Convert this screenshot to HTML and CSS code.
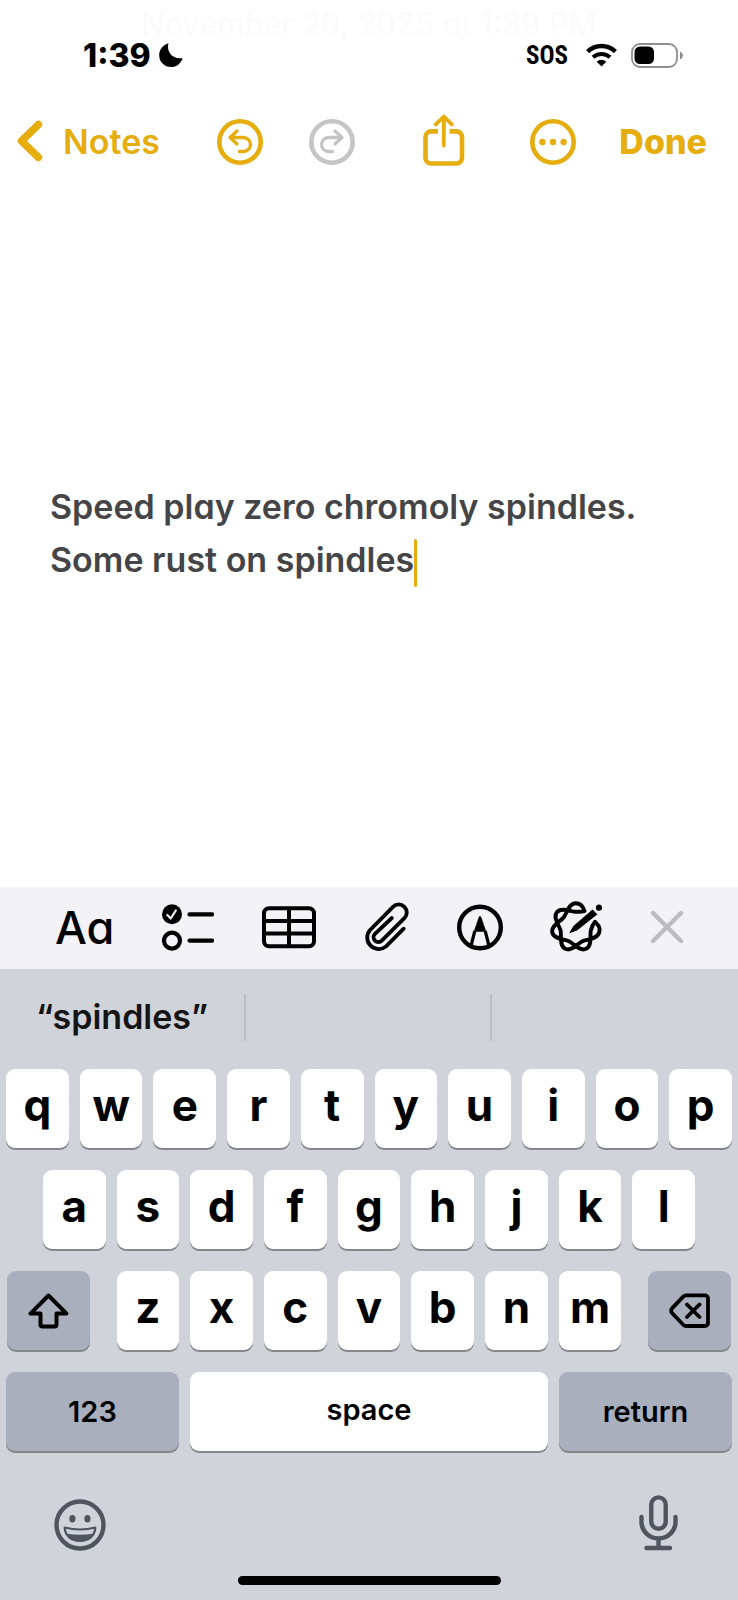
FILE: index.html
```html
<!DOCTYPE html>
<html lang="en">
  <head>
    <meta charset="UTF-8" />
    <meta name="viewport" content="width=device-width, initial-scale=1.0" />
    <title>Notes</title>
    <link rel="stylesheet" href="styles.css">
  </head>
  <body>
    <header>
      <time class="note-date">November 20, 2025 at 1:39 PM</time>
      <div class="status-bar">
        <div class="status-left">
          <span class="clock">1:39</span>
          <svg width="24" height="24" viewBox="0 0 24 24"><path d="M9.5 0.3C7.5 7 11.5 16.500 23.6 15.200C22 20.500 17.500 24 12 24C5.400 24 0.200 18.800 0.200 12.200C0.200 6.600 4 1.800 9.500 0.300Z" /></svg>
        </div>
        <div class="status-right">
          <span class="sos">SOS</span>
          <svg width="31" height="24" viewBox="0 0 31 24" fill="none" stroke="#000">
            <path d="M1.600 8.600a20 20 0 0 1 27.800 0" stroke-width="4.400" />
            <path d="M7 14.300a12.300 12.300 0 0 1 17 0" stroke-width="4" />
            <path d="M15.500 23.500l-4.800-4.800a7 7 0 0 1 9.600 0z" fill="#000" stroke="none" />
          </svg>
          <svg class="battery" width="52" height="25" viewBox="0 0 52 25">
            <rect x="1" y="1" width="45" height="23" rx="8" fill="#fff" stroke="#8f8f8f" stroke-width="1.800" />
            <rect x="3.500" y="3.500" width="19.500" height="17.500" rx="5.500" />
            <path d="M49 8.500q3 1.500 3 4t-3 4z" fill="#8f8f8f" />
          </svg>
        </div>
      </div>
      <nav class="nav-bar">
        <a class="back" href="#">
          <svg width="26" height="42" viewBox="0 0 26 42" fill="none" stroke="currentColor" stroke-width="7.500" stroke-linecap="round" stroke-linejoin="round"><path d="M21.500 4.500L4.500 21L21.500 37.500" /></svg>
          Notes
        </a>
        <button type="button" aria-label="Undo">
          <svg width="46" height="46" viewBox="0 0 46 46" fill="none" stroke="currentColor" stroke-linecap="round" stroke-linejoin="round">
            <circle cx="23" cy="23" r="20.700" stroke-width="4.600" />
            <path d="M20 12L13 18.500L20 25M13.500 18.500H26.500a7 7 0 0 1 0 14H22.500" stroke-width="3.300" />
          </svg>
        </button>
        <button type="button" class="off" aria-label="Redo">
          <svg width="46" height="46" viewBox="0 0 46 46" fill="none" stroke="currentColor" stroke-linecap="round" stroke-linejoin="round">
            <circle cx="23" cy="23" r="20.700" stroke-width="4.600" />
            <path d="M26 12L33 18.500L26 25M32.500 18.500H19.500a7 7 0 0 0 0 14H23.500" stroke-width="3.300" />
          </svg>
        </button>
        <button type="button" aria-label="Share">
          <svg width="42" height="56" viewBox="0 0 42 56" fill="none" stroke="currentColor" stroke-linejoin="round">
            <path d="M15 17.400H8a5.500 5.500 0 0 0-5.500 5.500V44a5.500 5.500 0 0 0 5.500 5.500H33.500a5.500 5.500 0 0 0 5.500-5.500V22.900a5.500 5.500 0 0 0-5.500-5.500H26.500" stroke-width="4.600" />
            <path d="M20.800 3V31.500M12.800 10.300L20.800 2.500L28.800 10.300" stroke-width="3.800" stroke-linecap="round" />
          </svg>
        </button>
        <button type="button" aria-label="More">
          <svg width="46" height="46" viewBox="0 0 46 46" fill="currentColor">
            <circle cx="23" cy="23" r="20.700" fill="none" stroke="currentColor" stroke-width="4.600" />
            <circle cx="12.400" cy="23" r="3.200" />
            <circle cx="23" cy="23" r="3.200" />
            <circle cx="33.600" cy="23" r="3.200" />
          </svg>
        </button>
        <button type="button" class="done">Done</button>
      </nav>
    </header>

    <main class="note" contenteditable="true" role="textbox" aria-multiline="true" aria-label="Note" spellcheck="false">
      <p>Speed play zero chromoly spindles.</p>
      <p>Some rust on spindles<span class="caret"></span></p>
    </main>

    <div class="format-bar">
      <button type="button" class="text-style" aria-label="Text style">Aa</button>
      <button type="button" aria-label="Checklist">
        <svg width="52" height="47" viewBox="0 0 52 47" fill="none" stroke="#000" stroke-width="4.200" stroke-linecap="round" stroke-linejoin="round">
          <circle cx="10" cy="10.300" r="10" fill="#000" stroke="none" />
          <path d="M5.300 11L8.700 14.500L13.800 6.500" stroke="#f2f2f7" stroke-width="2.200" />
          <circle cx="10" cy="36.600" r="8" />
          <path d="M27.500 10.400H50M27.500 36.600H50" />
        </svg>
      </button>
      <button type="button" aria-label="Table">
        <svg width="54" height="43" viewBox="0 0 54 43" fill="none" stroke="#000" stroke-width="4">
          <rect x="2" y="2.200" width="50" height="38" rx="5" />
          <path d="M2 15H52M2 27.400H52M27 2V40" />
        </svg>
      </button>
      <button type="button" aria-label="Attachment">
        <svg width="46" height="50" viewBox="0 0 46 50" fill="none" stroke="#000" stroke-width="3.800" stroke-linecap="round"><path d="M40.700 26.700L23.100 44.400A11.500 11.500 0 0 1 6.900 28.200L30 4.800A8 8 0 0 1 41.400 16.200L18.800 38.600A4.800 4.800 0 0 1 12 31.800L28.800 16" /></svg>
      </button>
      <button type="button" aria-label="Markup">
        <svg width="46" height="47" viewBox="0 0 46 47" fill="none" stroke="#000" stroke-linejoin="round">
          <circle cx="23" cy="23.500" r="20.800" stroke-width="4.400" />
          <path d="M17.800 27L14 42M28.200 27L32 42" stroke-width="3.200" />
          <path d="M23 13.500L18.500 26.500H27.500Z" fill="#000" stroke-width="2.500" />
        </svg>
      </button>
      <button type="button" aria-label="Image wand">
        <svg width="52" height="52" viewBox="0 0 52 52" fill="none" stroke="#000" stroke-width="3.900" stroke-linejoin="round">
          <path d="M45 20.700C48 24 50.700 26 49.100 31.500C47.500 38.300 36.900 38 32.400 40.200C27.900 42.400 21.600 50.800 15.300 47.800C9 44.800 11.700 34.500 10.600 29.600C9.500 24.700 2.500 16.700 6.900 11.200C11.300 5.700 20.700 10.700 25.700 10.700C29 10.700 32 11 34.500 10C33 5 30 2.200 25.700 2.200C18.700 2.200 16.700 12.600 13.600 16.500C10.500 20.400 0.700 24.700 2.300 31.500C3.900 38.300 14.500 38 19 40.200C23.500 42.400 29.800 50.800 36.100 47.800C42.400 44.800 39.700 34.500 40.800 29.600C41.900 25 43 23 45 20.700Z" />
          <path d="M20 31.500L24 25L42.500 9L46.800 13.300L27 29Z" fill="#000" stroke-width="1" stroke-linejoin="round" />
          <circle cx="49" cy="6.700" r="3.100" fill="#000" stroke="none" />
        </svg>
      </button>
      <button type="button" class="close" aria-label="Close">
        <svg width="34" height="34" viewBox="0 0 34 34" fill="none" stroke="#bcbcc1" stroke-width="4.400" stroke-linecap="round"><path d="M3 3L31 31M31 3L3 31" /></svg>
      </button>
    </div>

    <section class="keyboard">
      <div class="suggestions">
        <button type="button">“spindles”</button>
        <button type="button" aria-label="Suggestion 2"></button>
        <button type="button" aria-label="Suggestion 3"></button>
      </div>
      <div class="keys">
        <div class="row">
          <button type="button" class="key">q</button>
          <button type="button" class="key">w</button>
          <button type="button" class="key">e</button>
          <button type="button" class="key">r</button>
          <button type="button" class="key">t</button>
          <button type="button" class="key">y</button>
          <button type="button" class="key">u</button>
          <button type="button" class="key">i</button>
          <button type="button" class="key">o</button>
          <button type="button" class="key">p</button>
        </div>
        <div class="row">
          <button type="button" class="key">a</button>
          <button type="button" class="key">s</button>
          <button type="button" class="key">d</button>
          <button type="button" class="key">f</button>
          <button type="button" class="key">g</button>
          <button type="button" class="key">h</button>
          <button type="button" class="key">j</button>
          <button type="button" class="key">k</button>
          <button type="button" class="key">l</button>
        </div>
        <div class="row">
          <button type="button" class="key dark shift" aria-label="Shift">
            <svg width="41" height="36" viewBox="0 0 41 36" fill="none" stroke="#000" stroke-width="4" stroke-linejoin="round"><path d="M20.500 2.500L2.500 20.600H12.500V31.500a2 2 0 0 0 2 2H26.500a2 2 0 0 0 2-2V20.600H38.500Z" /></svg>
          </button>
          <button type="button" class="key">z</button>
          <button type="button" class="key">x</button>
          <button type="button" class="key">c</button>
          <button type="button" class="key">v</button>
          <button type="button" class="key">b</button>
          <button type="button" class="key">n</button>
          <button type="button" class="key">m</button>
          <button type="button" class="key dark delete" aria-label="Delete">
            <svg width="42" height="36" viewBox="0 0 42 36" fill="none" stroke="#000" stroke-width="3.800" stroke-linecap="round" stroke-linejoin="round"><path d="M17 2.400H36a3 3 0 0 1 3 3V30a3 3 0 0 1-3 3H17Q15.500 33 14.500 32L3 20Q1.300 17.700 3 15.400L14.500 3.400Q15.500 2.400 17 2.400ZM18 11.500L30.500 24M30.500 11.500L18 24" /></svg>
          </button>
        </div>
        <div class="row">
          <button type="button" class="key dark word">123</button>
          <button type="button" class="key word space">space</button>
          <button type="button" class="key dark word">return</button>
        </div>
      </div>
      <div class="extras">
        <button type="button" aria-label="Emoji">
          <svg width="52" height="52" viewBox="0 0 52 52" fill="#50545e">
            <circle cx="26" cy="26" r="23.500" fill="none" stroke="#50545e" stroke-width="4.400" />
            <ellipse cx="18.400" cy="19.800" rx="3.100" ry="3.700" />
            <ellipse cx="33.400" cy="19.800" rx="3.100" ry="3.700" />
            <path d="M10.700 28.500Q26 32.500 41.300 28.500C41 37 34.500 42 26 42S11 37 10.700 28.500Z" fill="none" stroke="#50545e" stroke-width="2.200" stroke-linejoin="round" />
            <path d="M12 34.500Q26 37 40 34.500C37 40.500 32 42.500 26 42.500S15 40.500 12 34.500Z" />
          </svg>
        </button>
        <button type="button" aria-label="Dictation">
          <svg width="39" height="56" viewBox="0 0 39 56" fill="none" stroke="#50545e" stroke-width="4.400" stroke-linecap="round">
            <rect x="12.300" y="2.400" width="14.400" height="31.400" rx="7.200" />
            <path d="M2.500 22v5a17 16.500 0 0 0 34 0v-5M19.500 43.500V53M7.500 53H31" />
          </svg>
        </button>
      </div>
      <div class="home-indicator"></div>
    </section>
  </body>
</html>
```
FILE: styles.css
```css
* {
  box-sizing: border-box;
}
body {
  font-family: Inter, "Open Sans", sans-serif;
  background-color: #fff;
  color: #000;
  margin: 0;
  min-height: 100vh;
  display: flex;
  flex-direction: column;
}
button {
  display: flex;
  justify-content: center;
  align-items: center;
  padding: 0;
  border: none;
  background: none;
  font-family: inherit;
  color: inherit;
  cursor: pointer;
}
svg {
  display: block;
  flex: none;
}
header {
  position: relative;
}
/* scrolled note date fading out under the status bar */
.note-date {
  position: absolute;
  top: 4px;
  left: 0;
  right: 0;
  text-align: center;
  font-size: 31px;
  line-height: 40px;
  color: #fbfbfb;
  font-feature-settings: "cv11";
}
.status-bar {
  position: relative;
  display: flex;
  justify-content: space-between;
  align-items: center;
  height: 38px;
  margin-top: 36px;
  padding: 0 55px 0 83px;
}
.status-left,
.status-right {
  display: flex;
  align-items: center;
}
.status-left {
  gap: 8px;
}
.status-right {
  gap: 14px;
}
.clock {
  font-size: 32px;
  font-weight: 800;
}
.sos {
  margin-right: 4px;
  font-family: "Liberation Sans Narrow", "Roboto Condensed", Roboto, sans-serif;
  font-size: 25px;
  font-weight: 700;
}
.nav-bar {
  display: grid;
  grid-template-columns: 194fr 92fr 92fr 132fr 86fr 142fr;
  align-items: center;
  height: 80px;
  margin-top: 28px;
  color: #e5ae0e;
}
.back {
  display: flex;
  align-items: center;
  gap: 20px;
  padding: 0 0 2px 17px;
  font-size: 34px;
  font-weight: 600;
  color: inherit;
  text-decoration: none;
}
.off {
  color: #c5c5c7;
}
.done {
  justify-content: flex-end;
  padding: 0 31px 2px 0;
  font-size: 34px;
  font-weight: 800;
}
.note {
  flex: 1;
  padding: 298px 50px 0;
  font-size: 34px;
  line-height: 53px;
  font-weight: 600;
  color: #454547;
  outline: none;
  font-feature-settings: "cv11";
}
.note p {
  margin: 0;
}
.caret {
  display: inline-block;
  width: 3px;
  height: 48px;
  border-radius: 2px;
  vertical-align: middle;
  background-color: #e5ae0e;
}
.format-bar {
  display: flex;
  justify-content: space-between;
  align-items: center;
  height: 82px;
  padding: 0 54px 2px 55px;
  background-color: #f2f2f7;
}
.text-style {
  font-size: 45px;
  font-weight: 500;
  font-feature-settings: "cv11";
}
.keyboard {
  padding-bottom: 15px;
  background-color: #d0d3da;
}
.suggestions {
  display: grid;
  grid-template-columns: 244fr 246fr 248fr;
  padding: 25px 0 28px;
}
.suggestions button {
  height: 47px;
  padding-bottom: 2px;
  font-size: 34px;
  font-weight: 600;
  color: #141414;
}
.suggestions button + button {
  border-left: 2px solid #bbbec6;
}
.keys {
  display: grid;
  gap: 22px;
  padding: 0 6px;
}
.row {
  display: flex;
  justify-content: center;
  gap: 11px;
}
/* ten keys and nine gaps fill a full row */
.key {
  width: calc((100% - 99px) / 10);
  height: 79px;
  padding-bottom: 8px;
  border-radius: 9px;
  background-color: #fff;
  box-shadow: 0 2px 0 #85878b;
  font-size: 44px;
  font-weight: 700;
}
.dark {
  padding-bottom: 0;
  background-color: #a9afbc;
}
.shift,
.delete {
  width: 83px;
}
.shift {
  margin-right: 16px;
}
.delete {
  margin-left: 16px;
}
.word {
  width: 173px;
  font-size: 29px;
  font-weight: 600;
}
.space {
  flex: 1;
  padding-bottom: 4px;
}
.extras {
  display: flex;
  justify-content: space-between;
  align-items: flex-end;
  padding: 44px 60px 0 54px;
}
.home-indicator {
  width: 263px;
  height: 9px;
  margin: 25px auto 0;
  border-radius: 5px;
  background-color: #000;
}
```
